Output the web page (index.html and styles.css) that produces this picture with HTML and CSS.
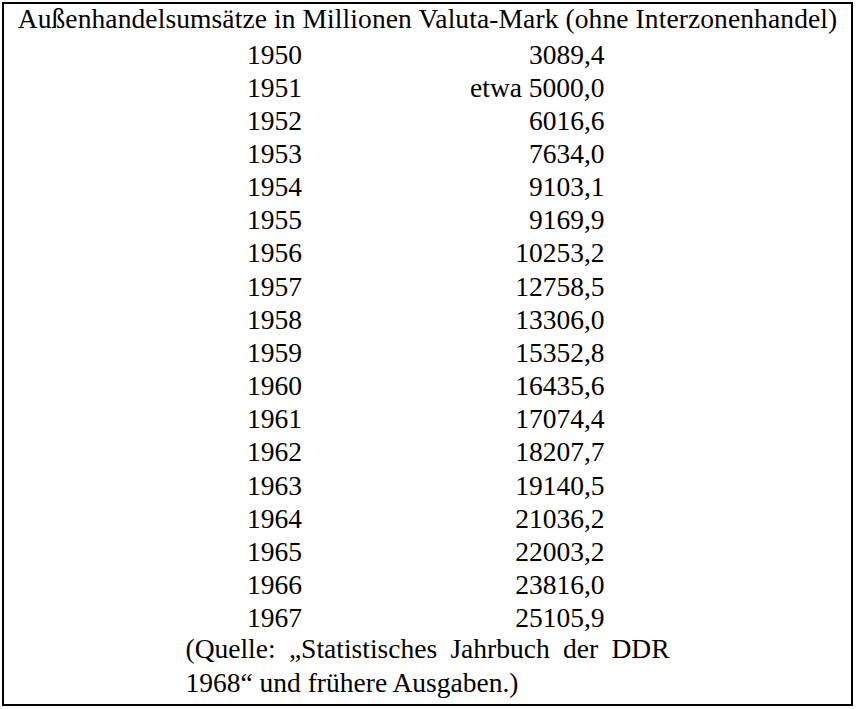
FILE: index.html
```html
<!DOCTYPE html>
<html lang="de">
<head>
<meta charset="utf-8">
<title>Außenhandelsumsätze</title>
<link rel="stylesheet" href="styles.css">
</head>
<body>
<div class="frame">
  <div class="title">Außenhandelsumsätze in Millionen Valuta-Mark (ohne Interzonenhandel)</div>
  <div class="body">
    <div class="grid">
      <div class="year">1950</div><div class="val">3089,4</div>
      <div class="year">1951</div><div class="val">etwa 5000,0</div>
      <div class="year">1952</div><div class="val">6016,6</div>
      <div class="year">1953</div><div class="val">7634,0</div>
      <div class="year">1954</div><div class="val">9103,1</div>
      <div class="year">1955</div><div class="val">9169,9</div>
      <div class="year">1956</div><div class="val">10253,2</div>
      <div class="year">1957</div><div class="val">12758,5</div>
      <div class="year">1958</div><div class="val">13306,0</div>
      <div class="year">1959</div><div class="val">15352,8</div>
      <div class="year">1960</div><div class="val">16435,6</div>
      <div class="year">1961</div><div class="val">17074,4</div>
      <div class="year">1962</div><div class="val">18207,7</div>
      <div class="year">1963</div><div class="val">19140,5</div>
      <div class="year">1964</div><div class="val">21036,2</div>
      <div class="year">1965</div><div class="val">22003,2</div>
      <div class="year">1966</div><div class="val">23816,0</div>
      <div class="year">1967</div><div class="val">25105,9</div>
    </div>
    <div class="note">
      <div class="note-line justified">(Quelle: „Statistisches Jahrbuch der DDR</div>
      <div class="note-line">1968“ und frühere Ausgaben.)</div>
    </div>
  </div>
</div>
</body>
</html>
```

FILE: styles.css
```css
html, body {
  margin: 0;
  padding: 0;
  background: #fff;
}

body {
  font-family: "Liberation Serif", "Times New Roman", serif;
  font-size: 27.5px;
  color: #000;
}

.frame {
  margin: 2px 0 0 2px;
  width: 847px;
  height: 700px;
  border: 2px solid #000;
  display: flex;
  flex-direction: column;
}

.title {
  line-height: 30px;
  text-align: center;
  white-space: nowrap;
  letter-spacing: 0.1px;
}

.body {
  width: 484px;
  margin: 3.5px auto 0;
}

.grid {
  display: grid;
  grid-template-columns: 178px 1fr;
  line-height: 33.15px;
}

.year {
  text-align: center;
}

.val {
  text-align: right;
  padding-right: 65px;
  white-space: nowrap;
}

.note {
  margin-top: -2px;
  line-height: 33.5px;
}

.note-line {
  white-space: nowrap;
}

.justified {
  white-space: normal;
  text-align: justify;
  text-align-last: justify;
}
```
